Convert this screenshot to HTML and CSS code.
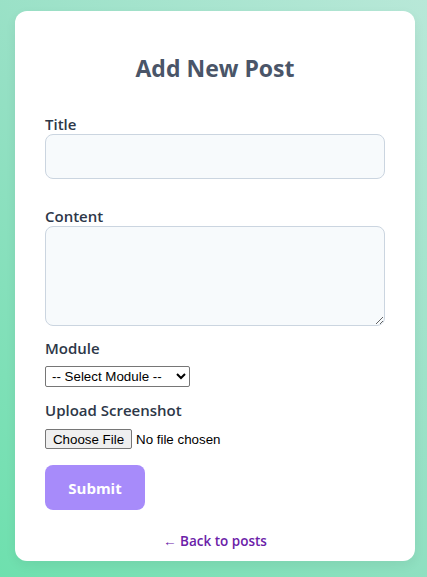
FILE: index.html
```html
<!DOCTYPE html>
<html lang="en">
<head>
<meta charset="utf-8">
<title>Add New Post</title>
<link rel="stylesheet" href="styles.css">
</head>
<body>
<div class="page">
  <div class="card">
    <h2 class="heading">Add New Post</h2>
    <form class="form">
      <label class="label" for="title">Title</label>
      <input class="field field-title" id="title" type="text">
      <label class="label label-content" for="content">Content</label>
      <textarea class="field field-area" id="content"></textarea>
      <label class="label label-module" for="module">Module</label>
      <select class="select" id="module">
        <option>-- Select Module --</option>
      </select>
      <label class="label label-upload" for="shot">Upload Screenshot</label>
      <div class="file-row">
        <span class="file-btn">Choose File</span>
        <span class="file-text">No file chosen</span>
      </div>
      <button class="submit" type="button">Submit</button>
    </form>
    <div class="back-row"><a class="back" href="#">← Back to posts</a></div>
  </div>
</div>
</body>
</html>
```
FILE: styles.css
```css
html, body {
  margin: 0;
  padding: 0;
  height: 100%;
}
body {
  background: linear-gradient(45deg, #6ee0ae 0%, #95e0c4 50%, #b8e8d8 100%);
  font-family: "Open Sans", "Noto Sans", sans-serif;
}
.page {
  padding: 11px 12px 0 15px;
}
.card {
  width: 400px;
  height: 550px;
  box-sizing: border-box;
  background: #ffffff;
  border-radius: 12px;
  padding: 30px 30px 0 30px;
  box-shadow: 0 4px 12px rgba(0, 0, 0, 0.06);
}
.heading {
  margin: 13px 0 0 0;
  text-align: center;
  font-size: 23px;
  line-height: 28px;
  font-weight: 700;
  color: #4a5568;
}
.form {
  display: flex;
  flex-direction: column;
  align-items: flex-start;
  margin-top: 32px;
}
.label {
  font-size: 15px;
  line-height: 20px;
  font-weight: 600;
  color: #2d3748;
  display: block;
}
.field {
  box-sizing: border-box;
  width: 340px;
  background: #f7fafc;
  border: 1px solid #cbd5e0;
  border-radius: 8px;
  margin: 0;
  padding: 8px;
  font-family: inherit;
}
.field-title {
  height: 45px;
  margin-bottom: 27px;
}
.field-area {
  height: 100px;
  resize: vertical;
  margin-bottom: 12px;
}
.select {
  margin: 8px 0 13px 0;
  height: 21px;
  width: 145px;
  font-family: Arial, "Liberation Sans", sans-serif;
  font-size: 13.3333px;
  border: 1px solid #767676;
  border-radius: 2px;
  background: #fff;
  color: #000;
  padding: 0 0 0 2px;
}
.file-row {
  display: flex;
  align-items: center;
  margin-top: 9px;
  font-family: Arial, "Liberation Sans", sans-serif;
  font-size: 13.3333px;
  color: #000;
}
.file-btn {
  box-sizing: border-box;
  height: 20px;
  width: 87px;
  display: flex;
  align-items: center;
  justify-content: center;
  background: #efefef;
  border: 1px solid #767676;
  border-radius: 2px;
  margin-right: 4px;
}
.submit {
  margin-top: 16px;
  width: 100px;
  height: 45px;
  border: none;
  border-radius: 8px;
  background: #a78bfa;
  color: #ffffff;
  font-family: inherit;
  font-size: 15px;
  font-weight: 700;
}
.back-row {
  text-align: center;
  margin-top: 19px;
}
.back {
  color: #6b21a8;
  text-decoration: none;
  font-size: 13.5px;
  font-weight: 600;
}
```
